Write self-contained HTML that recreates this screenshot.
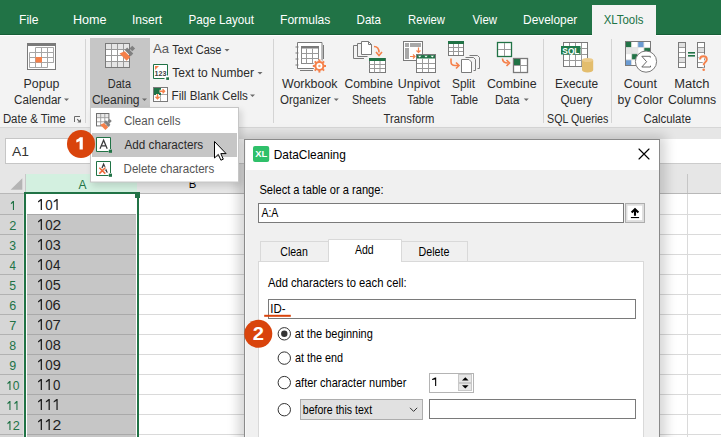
<!DOCTYPE html>
<html><head><meta charset="utf-8"><title>Excel XLTools DataCleaning</title>
<style>html,body{margin:0;padding:0;width:721px;height:437px;overflow:hidden;background:#fff;font-family:"Liberation Sans",sans-serif}</style>
</head><body>
<svg width="721" height="437" viewBox="0 0 721 437" style="display:block"><defs><filter id="blur3" x="-20%" y="-20%" width="140%" height="140%"><feGaussianBlur stdDeviation="3"/></filter><filter id="blur6" x="-20%" y="-20%" width="140%" height="140%"><feGaussianBlur stdDeviation="6"/></filter></defs><g font-family="&quot;Liberation Sans&quot;, sans-serif"><rect x="0" y="0" width="721" height="34" fill="#217346"/>
<rect x="0" y="34" width="721" height="1" fill="#175e37"/>
<rect x="0" y="35" width="721" height="1" fill="#ffffff"/>
<rect x="0" y="36" width="721" height="91" fill="#f3f3f3"/>
<rect x="0" y="127" width="721" height="1" fill="#d6d6d6"/>
<rect x="0" y="128" width="721" height="66" fill="#e6e6e6"/>
<rect x="0" y="194" width="721" height="243" fill="#ffffff"/>
<rect x="592" y="5" width="64" height="31" fill="#f3f3f3"/>
<text x="19.03" y="24.00" font-size="13" fill="#ffffff" textLength="19.53" lengthAdjust="spacingAndGlyphs">File</text>
<text x="72.99" y="24.00" font-size="13" fill="#ffffff" textLength="33.61" lengthAdjust="spacingAndGlyphs">Home</text>
<text x="131.91" y="24.00" font-size="13" fill="#ffffff" textLength="30.16" lengthAdjust="spacingAndGlyphs">Insert</text>
<text x="188.57" y="24.00" font-size="13" fill="#ffffff" textLength="65.50" lengthAdjust="spacingAndGlyphs">Page Layout</text>
<text x="280.03" y="24.00" font-size="13" fill="#ffffff" textLength="50.36" lengthAdjust="spacingAndGlyphs">Formulas</text>
<text x="356.57" y="24.00" font-size="13" fill="#ffffff" textLength="24.45" lengthAdjust="spacingAndGlyphs">Data</text>
<text x="408.10" y="24.00" font-size="13" fill="#ffffff" textLength="36.89" lengthAdjust="spacingAndGlyphs">Review</text>
<text x="472.44" y="24.00" font-size="13" fill="#ffffff" textLength="24.55" lengthAdjust="spacingAndGlyphs">View</text>
<text x="523.05" y="24.00" font-size="13" fill="#ffffff" textLength="54.17" lengthAdjust="spacingAndGlyphs">Developer</text>
<text x="603.72" y="24.00" font-size="13" fill="#217346" textLength="39.67" lengthAdjust="spacingAndGlyphs">XLTools</text>
<rect x="85" y="39" width="1" height="84" fill="#d4d4d4"/>
<rect x="273" y="39" width="1" height="84" fill="#d4d4d4"/>
<rect x="543" y="39" width="1" height="84" fill="#d4d4d4"/>
<rect x="611" y="39" width="1" height="84" fill="#d4d4d4"/>
<rect x="90" y="38" width="60" height="69" fill="#c6c6c6"/>
<text x="23.61" y="88.00" font-size="12.5" fill="#2b2b2b" textLength="35.81" lengthAdjust="spacingAndGlyphs">Popup</text>
<text x="14.12" y="104.00" font-size="12.5" fill="#2b2b2b" textLength="47.09" lengthAdjust="spacingAndGlyphs">Calendar</text>
<text x="2.89" y="123.10" font-size="12.5" fill="#2b2b2b" textLength="62.85" lengthAdjust="spacingAndGlyphs">Date &amp; Time</text>
<text x="107.87" y="88.00" font-size="12.5" fill="#2b2b2b" textLength="23.15" lengthAdjust="spacingAndGlyphs">Data</text>
<text x="91.90" y="104.00" font-size="12.5" fill="#2b2b2b" textLength="47.67" lengthAdjust="spacingAndGlyphs">Cleaning</text>
<text x="172.28" y="54.00" font-size="12.5" fill="#2b2b2b" textLength="49.23" lengthAdjust="spacingAndGlyphs">Text Case</text>
<text x="172.26" y="77.25" font-size="12.5" fill="#2b2b2b" textLength="81.74" lengthAdjust="spacingAndGlyphs">Text to Number</text>
<text x="171.57" y="99.75" font-size="12.5" fill="#2b2b2b" textLength="76.37" lengthAdjust="spacingAndGlyphs">Fill Blank Cells</text>
<text x="281.94" y="88.00" font-size="12.5" fill="#2b2b2b" textLength="55.54" lengthAdjust="spacingAndGlyphs">Workbook</text>
<text x="279.98" y="104.00" font-size="12.5" fill="#2b2b2b" textLength="50.70" lengthAdjust="spacingAndGlyphs">Organizer</text>
<text x="344.39" y="88.00" font-size="12.5" fill="#2b2b2b" textLength="48.68" lengthAdjust="spacingAndGlyphs">Combine</text>
<text x="352.01" y="104.00" font-size="12.5" fill="#2b2b2b" textLength="33.85" lengthAdjust="spacingAndGlyphs">Sheets</text>
<text x="397.82" y="88.00" font-size="12.5" fill="#2b2b2b" textLength="42.26" lengthAdjust="spacingAndGlyphs">Unpivot</text>
<text x="407.28" y="104.00" font-size="12.5" fill="#2b2b2b" textLength="26.22" lengthAdjust="spacingAndGlyphs">Table</text>
<text x="451.97" y="88.00" font-size="12.5" fill="#2b2b2b" textLength="23.10" lengthAdjust="spacingAndGlyphs">Split</text>
<text x="450.77" y="104.00" font-size="12.5" fill="#2b2b2b" textLength="27.25" lengthAdjust="spacingAndGlyphs">Table</text>
<text x="486.88" y="88.00" font-size="12.5" fill="#2b2b2b" textLength="49.71" lengthAdjust="spacingAndGlyphs">Combine</text>
<text x="495.07" y="104.00" font-size="12.5" fill="#2b2b2b" textLength="24.45" lengthAdjust="spacingAndGlyphs">Data</text>
<text x="383.52" y="123.10" font-size="12.5" fill="#2b2b2b" textLength="50.95" lengthAdjust="spacingAndGlyphs">Transform</text>
<text x="555.05" y="88.00" font-size="12.5" fill="#2b2b2b" textLength="43.03" lengthAdjust="spacingAndGlyphs">Execute</text>
<text x="560.47" y="104.00" font-size="12.5" fill="#2b2b2b" textLength="32.01" lengthAdjust="spacingAndGlyphs">Query</text>
<text x="547.02" y="123.10" font-size="12.5" fill="#2b2b2b" textLength="61.34" lengthAdjust="spacingAndGlyphs">SQL Queries</text>
<text x="623.68" y="88.00" font-size="12.5" fill="#2b2b2b" textLength="33.23" lengthAdjust="spacingAndGlyphs">Count</text>
<text x="617.61" y="104.00" font-size="12.5" fill="#2b2b2b" textLength="45.32" lengthAdjust="spacingAndGlyphs">by Color</text>
<text x="674.27" y="88.00" font-size="12.5" fill="#2b2b2b" textLength="35.22" lengthAdjust="spacingAndGlyphs">Match</text>
<text x="667.89" y="104.00" font-size="12.5" fill="#2b2b2b" textLength="48.25" lengthAdjust="spacingAndGlyphs">Columns</text>
<text x="643.43" y="123.10" font-size="12.5" fill="#2b2b2b" textLength="47.57" lengthAdjust="spacingAndGlyphs">Calculate</text>
<path d="M64 98.5h5l-2.5 2.5z" fill="#6a6a6a"/>
<path d="M142 98.5h5l-2.5 2.5z" fill="#6a6a6a"/>
<path d="M224.5 49.0h5.0l-2.5 2.5z" fill="#6a6a6a"/>
<path d="M257.5 72.0h5.0l-2.5 2.5z" fill="#6a6a6a"/>
<path d="M250 94.5h5l-2.5 2.5z" fill="#6a6a6a"/>
<path d="M333.75 98.5h5.0l-2.5 2.5z" fill="#6a6a6a"/>
<path d="M523.75 98.5h5.0l-2.5 2.5z" fill="#6a6a6a"/>
<path d="M74.5 122V116.5H80" fill="none" stroke="#6a6a6a" stroke-width="1"/><path d="M77.2 119.2l2.6 2.6" stroke="#6a6a6a" stroke-width="1.2"/><path d="M81 119V122.6H77.4Z" fill="#6a6a6a"/>
<text x="153.00" y="52.60" font-size="13.5" fill="#5a5a5a" textLength="16.04" lengthAdjust="spacingAndGlyphs">Aa</text>
<g>
<rect x="27.5" y="43.5" width="28" height="26" fill="#ffffff" stroke="#7a7a7a" stroke-width="1"/>
<rect x="27" y="43" width="29" height="3" fill="#7a7a7a"/>
<path d="M35.5 47.5h18v15M35.5 47.5v20M41.5 47.5v20M47.5 47.5v20M29.5 52.5h24M29.5 57.5h24M29.5 62.5h24M29.5 52.5v15h18M53.5 47.5v15" fill="none" stroke="#a6a6a6" stroke-width="1"/>
<rect x="35.5" y="57" width="6.5" height="5.5" fill="#f5804a"/>
</g>
<rect x="105.5" y="43.5" width="24" height="24" fill="#ffffff" stroke="#7a7a7a" stroke-width="1"/>
<rect x="106" y="44" width="23" height="5.5" fill="#e6e6e6"/>
<rect x="106" y="62" width="23" height="5.5" fill="#e6e6e6"/>
<path d="M111.5 43.5v24M117.5 43.5v24M123.5 43.5v24M105.5 49.5h24M105.5 55.5h24M105.5 61.5h24" stroke="#9a9a9a" stroke-width="1"/>
<rect x="105.5" y="43.5" width="24" height="24" fill="none" stroke="#7a7a7a" stroke-width="1"/>
<g transform="translate(125.2 55.6) rotate(45) scale(1)"><path d="M-3.4 -2.7H4.6V2.6H-5.4z" fill="#f5804a"/><rect x="-4.3" y="-7.1" width="8.6" height="3.6" fill="#808080"/><rect x="-2" y="-12" width="4" height="4" fill="#808080"/></g>
<rect x="129" y="64" width="1" height="3" fill="#7a7a7a"/>
<rect x="153.5" y="64.5" width="14.5" height="14" fill="#ffffff"/>
<path d="M167.5 75.5V64.5H153.5V78.5H164.5" fill="none" stroke="#217346"/>
<path d="M155 66h4l-4 4z" fill="#f5804a"/>
<text x="154.57" y="75.80" font-size="7.6" font-weight="bold" fill="#404040" textLength="11.90" lengthAdjust="spacingAndGlyphs">123</text>
<rect x="166.2" y="77.3" width="2.8" height="2.6" fill="#217346"/>
<rect x="153.5" y="87.5" width="14" height="14" fill="#ffffff"/>
<path d="M160.5 94.5H167.5M160.5 94.5V101.5" stroke="#a6a6a6"/>
<rect x="154" y="88" width="7" height="7" fill="#217346"/>
<path d="M159.6 91.3H164.4M162.6 89.3L164.6 91.3 162.6 93.3M157.5 94V98.6M155.5 96.7L157.5 98.7 159.5 96.7" fill="none" stroke="#fff" stroke-width="3"/>
<circle cx="160" cy="94" r="1.1" fill="#217346"/>
<path d="M159.6 91.3H164.4M162.6 89.3L164.6 91.3 162.6 93.3M157.5 94V98.6M155.5 96.7L157.5 98.7 159.5 96.7" fill="none" stroke="#f5804a" stroke-width="1.4"/>
<rect x="153.5" y="87.5" width="14" height="14" fill="none" stroke="#7a7a7a" stroke-width="1"/>
<path d="M297.5 42.5h24.5v26h-24.5z" fill="#fff" stroke="#7a7a7a"/>
<path d="M323.5 45v14M300 70.5h13" stroke="#7a7a7a"/>
<rect x="295.5" y="46.5" width="3" height="1" fill="#7a7a7a"/>
<rect x="295.5" y="52.5" width="3" height="1" fill="#7a7a7a"/>
<rect x="295.5" y="58.5" width="3" height="1" fill="#7a7a7a"/>
<rect x="295.5" y="64.5" width="3" height="1" fill="#7a7a7a"/>
<rect x="301.5" y="46.5" width="17" height="17" fill="#fff" stroke="#8a8a8a" stroke-width="1"/>
<rect x="301" y="46" width="18" height="2.5" fill="#7a7a7a"/>
<path d="M306.5 48.5v15M312.5 48.5v15M301.5 53.5h17M301.5 58.5h17" stroke="#9a9a9a"/>
<g transform="translate(319.4 66)"><circle r="6.3" fill="#f3f3f3"/><circle r="5" fill="#f5804a"/><rect x="-1" y="-6.6" width="2" height="2.5" fill="#f5804a" transform="rotate(0)"/><rect x="-1" y="-6.6" width="2" height="2.5" fill="#f5804a" transform="rotate(45)"/><rect x="-1" y="-6.6" width="2" height="2.5" fill="#f5804a" transform="rotate(90)"/><rect x="-1" y="-6.6" width="2" height="2.5" fill="#f5804a" transform="rotate(135)"/><rect x="-1" y="-6.6" width="2" height="2.5" fill="#f5804a" transform="rotate(180)"/><rect x="-1" y="-6.6" width="2" height="2.5" fill="#f5804a" transform="rotate(225)"/><rect x="-1" y="-6.6" width="2" height="2.5" fill="#f5804a" transform="rotate(270)"/><rect x="-1" y="-6.6" width="2" height="2.5" fill="#f5804a" transform="rotate(315)"/><circle r="3" fill="#fff"/><circle r="1.2" fill="#f5a070"/></g>
<path d="M353.5 58.5v-13h4M364 58.5h-10.5" fill="none" stroke="#7a7a7a"/>
<path d="M357.5 56.5v-13h4M367.5 56.5h-10" fill="none" stroke="#7a7a7a"/>
<path d="M361.5 54.5v-13h7l3 3v10z" fill="#fff" stroke="#7a7a7a"/><path d="M368.5 41.5v3h3" fill="none" stroke="#7a7a7a"/>
<path d="M374 46.5c3 0 5 2 5 6" fill="none" stroke="#f5804a" stroke-width="1.6"/><path d="M376 52l3 3.5 3-3.5" fill="none" stroke="#f5804a" stroke-width="1.6"/>
<rect x="369.5" y="58.5" width="16" height="14" fill="#fff" stroke="#7a7a7a" stroke-width="1"/>
<rect x="369" y="58" width="16.5" height="3" fill="#217346"/>
<path d="M374.5 61v11.5M380 61v11.5M369.5 64.5h15.5M369.5 68.5h15.5" stroke="#9a9a9a"/>
<rect x="403.5" y="41.5" width="19" height="19" fill="#fff" stroke="#7a7a7a" stroke-width="1"/>
<rect x="405" y="43" width="4" height="4" fill="#a8a8a8"/>
<rect x="410" y="43" width="11" height="4" fill="#a8a8a8"/>
<rect x="405" y="48" width="4" height="11" fill="#a8a8a8"/>
<path d="M418.5 47.5v5M416.5 50.5l2 2 2-2M410 56.5h5M413 54.5l2 2-2 2" fill="none" stroke="#f5804a" stroke-width="1.2"/>
<rect x="416.5" y="54.5" width="19" height="18" fill="#fff" stroke="#7a7a7a" stroke-width="1"/>
<rect x="416" y="54" width="20" height="4.5" fill="#217346"/>
<path d="M418 55.7h3.4l-1.7 1.7zM424.3 55.7h3.4l-1.7 1.7zM430.6 55.7h3.4l-1.7 1.7z" fill="#fff"/>
<path d="M422.5 58.5v14M428.5 58.5v14M416.5 63.5h19M416.5 68.5h19" stroke="#9a9a9a"/>
<rect x="416.5" y="54.5" width="19" height="18" fill="none" stroke="#7a7a7a" stroke-width="1"/>
<rect x="448.5" y="41.5" width="15" height="14" fill="#fff" stroke="#7a7a7a" stroke-width="1"/>
<path d="M453.5 44v11.5M458.5 44v11.5M448.5 47.5h15M448.5 51.5h15" stroke="#9a9a9a"/>
<rect x="448.5" y="41.5" width="15" height="14" fill="none" stroke="#7a7a7a" stroke-width="1"/>
<rect x="448" y="41" width="16" height="3" fill="#217346"/>
<path d="M451 58.5v3c0 2.5 1.5 4 4 4h3" fill="none" stroke="#f5804a" stroke-width="1.6"/><path d="M456 62.5l3 3-3 3" fill="none" stroke="#f5804a" stroke-width="1.6"/>
<path d="M469.5 55.5h8l2 2v11h-2M465.5 57.5h8l2 2v11h-2" fill="none" stroke="#7a7a7a"/>
<path d="M461.5 59.5h7.5l2.5 2.5v10.5h-10z" fill="#fff" stroke="#7a7a7a"/>
<rect x="497.5" y="42.5" width="14" height="14" fill="#fff" stroke="#217346" stroke-width="1.3"/>
<path d="M504.5 43v13M498 49.5h13" stroke="#9a9a9a"/>
<path d="M502.5 58.5c0 3 2 4.5 5.5 4.5" fill="none" stroke="#f5804a" stroke-width="1.6"/><path d="M506.5 60l3 3-3 3" fill="none" stroke="#f5804a" stroke-width="1.6"/>
<rect x="513.5" y="58.5" width="14" height="14" fill="#fff" stroke="#7a7a7a" stroke-width="1.3"/>
<rect x="514" y="59" width="6.5" height="6.5" fill="#217346"/>
<path d="M520.5 59v13M514 65.5h13" stroke="#9a9a9a"/>
<rect x="563.5" y="42.5" width="24" height="24" fill="#fff" stroke="#7a7a7a" stroke-width="1"/>
<path d="M569.5 43v23.5M575.5 43v23.5M581.5 43v23.5M563.5 48.5h24M563.5 54.5h24M563.5 60.5h24" stroke="#9a9a9a"/>
<rect x="563.5" y="42.5" width="24" height="24" fill="none" stroke="#7a7a7a" stroke-width="1"/>
<rect x="561" y="46" width="19.5" height="8.5" fill="#1f7d4c"/>
<text x="562.35" y="53.60" font-size="9" font-weight="bold" fill="#fff" textLength="17.11" lengthAdjust="spacingAndGlyphs">SQL</text>
<path d="M582 60v10c0 1.5 2.5 2.5 5.6 2.5s5.6-1 5.6-2.5v-10z" fill="#e3bd6d"/><ellipse cx="587.6" cy="60" rx="5.6" ry="2" fill="#eccb8a"/>
<rect x="625.5" y="41.5" width="6.15" height="6.1" fill="#217346"/>
<rect x="631.65" y="41.5" width="6.15" height="6.1" fill="#fff"/>
<rect x="637.8" y="41.5" width="6.15" height="6.1" fill="#6b9bd2"/>
<rect x="643.95" y="41.5" width="6.15" height="6.1" fill="#fff"/>
<rect x="625.5" y="47.6" width="6.15" height="6.1" fill="#e6e6e6"/>
<rect x="631.65" y="47.6" width="6.15" height="6.1" fill="#e6e6e6"/>
<rect x="637.8" y="47.6" width="6.15" height="6.1" fill="#fff"/>
<rect x="643.95" y="47.6" width="6.15" height="6.1" fill="#217346"/>
<rect x="625.5" y="53.7" width="6.15" height="6.1" fill="#fff"/>
<rect x="631.65" y="53.7" width="6.15" height="6.1" fill="#217346"/>
<rect x="637.8" y="53.7" width="6.15" height="6.1" fill="#fff"/>
<rect x="643.95" y="53.7" width="6.15" height="6.1" fill="#fff"/>
<rect x="625.5" y="59.8" width="6.15" height="6.1" fill="#6b9bd2"/>
<rect x="631.65" y="59.8" width="6.15" height="6.1" fill="#fff"/>
<rect x="637.8" y="59.8" width="6.15" height="6.1" fill="#fff"/>
<rect x="643.95" y="59.8" width="6.15" height="6.1" fill="#fff"/>
<path d="M631.65 41.5v24.5M637.8 41.5v24.5M643.95 41.5v24.5M625.5 47.6h24.5M625.5 53.7h24.5M625.5 59.8h24.5" stroke="#dedede" stroke-width="0.8"/>
<rect x="625.5" y="41.5" width="25" height="24" fill="none" stroke="#7a7a7a" stroke-width="1"/>
<circle cx="646" cy="61.6" r="10.6" fill="#fff" stroke="#7a7a7a" stroke-width="1"/>
<path d="M650.3 57.6V56.3H641.8L646.6 61.7 641.8 67H650.5V65.7" fill="none" stroke="#5a5a5a" stroke-width="0.9"/>
<rect x="678.5" y="42.5" width="7" height="25" fill="#fff" stroke="#7a7a7a" stroke-width="1"/>
<rect x="679.0" y="43.0" width="6" height="4.5" fill="#e0e0e0"/>
<rect x="679.0" y="58.0" width="6" height="4.5" fill="#e0e0e0"/>
<path d="M678.5 47.5h7M678.5 52.5h7M678.5 57.5h7M678.5 62.5h7" stroke="#9a9a9a"/>
<rect x="678.5" y="42.5" width="7" height="25" fill="none" stroke="#7a7a7a" stroke-width="1"/>
<rect x="697.5" y="42.5" width="7" height="25" fill="#fff" stroke="#7a7a7a" stroke-width="1"/>
<rect x="698.0" y="48.0" width="6" height="4.5" fill="#e0e0e0"/>
<path d="M697.5 47.5h7M697.5 52.5h7M697.5 57.5h7M697.5 62.5h7" stroke="#9a9a9a"/>
<rect x="697.5" y="42.5" width="7" height="25" fill="none" stroke="#7a7a7a" stroke-width="1"/>
<rect x="688" y="52" width="7" height="1.6" fill="#217346"/>
<rect x="688" y="55" width="7" height="1.6" fill="#217346"/>
<path d="M700 59.5c0-2 1.6-3.3 3.4-3.3s3.4 1.3 3.4 3.2c0 2.6-3.1 2.9-3.1 5.8" fill="none" stroke="#f3f3f3" stroke-width="3.8"/><circle cx="703.7" cy="69.8" r="2.3" fill="#f3f3f3"/>
<path d="M700 59.5c0-2 1.6-3.3 3.4-3.3s3.4 1.3 3.4 3.2c0 2.6-3.1 2.9-3.1 5.8" fill="none" stroke="#f5804a" stroke-width="1.9"/><circle cx="703.7" cy="69.8" r="1.3" fill="#f5804a"/>
<rect x="5.5" y="138.5" width="95" height="25" fill="#ffffff" stroke="#c6c6c6" stroke-width="1"/>
<text x="11.90" y="155.80" font-size="13" fill="#333" textLength="16.97" lengthAdjust="spacingAndGlyphs">A1</text>
<rect x="150" y="139" width="571" height="24" fill="#ffffff"/>
<rect x="150" y="163" width="571" height="1" fill="#cccccc"/>
<rect x="0" y="174" width="721" height="19" fill="#e6e6e6"/>
<rect x="26" y="174" width="111" height="19" fill="#d3f0e0"/>
<rect x="0" y="193" width="721" height="1" fill="#b8b8b8"/>
<path d="M22.3 178.2V189.7H10.6z" fill="#b4b4b4"/>
<rect x="25" y="174" width="1" height="19" fill="#c8c8c8"/>
<rect x="687" y="174" width="1" height="19" fill="#c6c6c6"/>
<text x="78.40" y="188.70" font-size="12.5" fill="#217346" textLength="8.02" lengthAdjust="spacingAndGlyphs">A</text>
<text x="188.69" y="188.40" font-size="12.5" fill="#000" textLength="7.61" lengthAdjust="spacingAndGlyphs">B</text>
<rect x="0" y="194" width="24" height="243" fill="#d6d6d6"/>
<rect x="23" y="194" width="1" height="243" fill="#e2e0e0"/>
<rect x="0" y="214" width="23" height="1" fill="#b2b2b2"/>
<rect x="0" y="234" width="23" height="1" fill="#b2b2b2"/>
<rect x="0" y="254" width="23" height="1" fill="#b2b2b2"/>
<rect x="0" y="274" width="23" height="1" fill="#b2b2b2"/>
<rect x="0" y="294" width="23" height="1" fill="#b2b2b2"/>
<rect x="0" y="314" width="23" height="1" fill="#b2b2b2"/>
<rect x="0" y="334" width="23" height="1" fill="#b2b2b2"/>
<rect x="0" y="354" width="23" height="1" fill="#b2b2b2"/>
<rect x="0" y="374" width="23" height="1" fill="#b2b2b2"/>
<rect x="0" y="394" width="23" height="1" fill="#b2b2b2"/>
<rect x="0" y="414" width="23" height="1" fill="#b2b2b2"/>
<rect x="0" y="434" width="23" height="1" fill="#b2b2b2"/>
<rect x="0" y="454" width="23" height="1" fill="#b2b2b2"/>
<path d="M12.90 200.90H14.00V210.00H12.90V202.90L10.90 204.30V203.10Z" fill="#217346"/>
<text x="9.16" y="230.00" font-size="13.2" fill="#217346" textLength="7.09" lengthAdjust="spacingAndGlyphs">2</text>
<text x="9.31" y="250.00" font-size="13.2" fill="#217346" textLength="6.79" lengthAdjust="spacingAndGlyphs">3</text>
<text x="9.57" y="270.00" font-size="13.2" fill="#217346" textLength="6.39" lengthAdjust="spacingAndGlyphs">4</text>
<text x="9.31" y="290.00" font-size="13.2" fill="#217346" textLength="6.79" lengthAdjust="spacingAndGlyphs">5</text>
<text x="9.18" y="310.00" font-size="13.2" fill="#217346" textLength="6.94" lengthAdjust="spacingAndGlyphs">6</text>
<text x="9.16" y="330.00" font-size="13.2" fill="#217346" textLength="7.09" lengthAdjust="spacingAndGlyphs">7</text>
<text x="9.24" y="350.00" font-size="13.2" fill="#217346" textLength="6.86" lengthAdjust="spacingAndGlyphs">8</text>
<text x="9.24" y="370.00" font-size="13.2" fill="#217346" textLength="6.94" lengthAdjust="spacingAndGlyphs">9</text>
<path d="M9.40 380.90H10.50V390.00H9.40V382.90L7.40 384.30V383.10Z" fill="#217346"/>
<text x="12.82" y="390.00" font-size="13.2" fill="#217346" textLength="6.72" lengthAdjust="spacingAndGlyphs">0</text>
<path d="M9.40 400.90H10.50V410.00H9.40V402.90L7.40 404.30V403.10Z" fill="#217346"/>
<path d="M16.40 400.90H17.50V410.00H16.40V402.90L14.40 404.30V403.10Z" fill="#217346"/>
<path d="M9.40 420.90H10.50V430.00H9.40V422.90L7.40 424.30V423.10Z" fill="#217346"/>
<text x="12.66" y="430.00" font-size="13.2" fill="#217346" textLength="7.09" lengthAdjust="spacingAndGlyphs">2</text>
<rect x="139" y="214" width="582" height="1" fill="#dadada"/>
<rect x="139" y="234" width="582" height="1" fill="#dadada"/>
<rect x="139" y="254" width="582" height="1" fill="#dadada"/>
<rect x="139" y="274" width="582" height="1" fill="#dadada"/>
<rect x="139" y="294" width="582" height="1" fill="#dadada"/>
<rect x="139" y="314" width="582" height="1" fill="#dadada"/>
<rect x="139" y="334" width="582" height="1" fill="#dadada"/>
<rect x="139" y="354" width="582" height="1" fill="#dadada"/>
<rect x="139" y="374" width="582" height="1" fill="#dadada"/>
<rect x="139" y="394" width="582" height="1" fill="#dadada"/>
<rect x="139" y="414" width="582" height="1" fill="#dadada"/>
<rect x="139" y="434" width="582" height="1" fill="#dadada"/>
<rect x="139" y="454" width="582" height="1" fill="#dadada"/>
<rect x="687" y="194" width="1" height="243" fill="#dadada"/>
<rect x="27" y="214" width="109" height="223" fill="#c6c6c6"/>
<rect x="27" y="214" width="109" height="1" fill="#a9a9a9"/>
<rect x="27" y="234" width="109" height="1" fill="#a9a9a9"/>
<rect x="27" y="254" width="109" height="1" fill="#a9a9a9"/>
<rect x="27" y="274" width="109" height="1" fill="#a9a9a9"/>
<rect x="27" y="294" width="109" height="1" fill="#a9a9a9"/>
<rect x="27" y="314" width="109" height="1" fill="#a9a9a9"/>
<rect x="27" y="334" width="109" height="1" fill="#a9a9a9"/>
<rect x="27" y="354" width="109" height="1" fill="#a9a9a9"/>
<rect x="27" y="374" width="109" height="1" fill="#a9a9a9"/>
<rect x="27" y="394" width="109" height="1" fill="#a9a9a9"/>
<rect x="27" y="414" width="109" height="1" fill="#a9a9a9"/>
<rect x="27" y="434" width="109" height="1" fill="#a9a9a9"/>
<path d="M40.70 199.00H42.00V210.00H40.70V201.00L38.00 202.40V201.20Z" fill="#222"/>
<text x="45.17" y="210.00" font-size="15.5" fill="#222" textLength="7.42" lengthAdjust="spacingAndGlyphs">0</text>
<path d="M56.40 199.00H57.70V210.00H56.40V201.00L53.70 202.40V201.20Z" fill="#222"/>
<path d="M40.70 219.00H42.00V230.00H40.70V221.00L38.00 222.40V221.20Z" fill="#222"/>
<text x="45.17" y="230.00" font-size="15.5" fill="#222" textLength="7.42" lengthAdjust="spacingAndGlyphs">0</text>
<text x="52.41" y="230.00" font-size="15.5" fill="#222" textLength="8.80" lengthAdjust="spacingAndGlyphs">2</text>
<path d="M40.70 239.00H42.00V250.00H40.70V241.00L38.00 242.40V241.20Z" fill="#222"/>
<text x="45.17" y="250.00" font-size="15.5" fill="#222" textLength="7.42" lengthAdjust="spacingAndGlyphs">0</text>
<text x="52.73" y="250.00" font-size="15.5" fill="#222" textLength="7.96" lengthAdjust="spacingAndGlyphs">3</text>
<path d="M40.70 259.00H42.00V270.00H40.70V261.00L38.00 262.40V261.20Z" fill="#222"/>
<text x="45.17" y="270.00" font-size="15.5" fill="#222" textLength="7.42" lengthAdjust="spacingAndGlyphs">0</text>
<text x="53.03" y="270.00" font-size="15.5" fill="#222" textLength="7.49" lengthAdjust="spacingAndGlyphs">4</text>
<path d="M40.70 279.00H42.00V290.00H40.70V281.00L38.00 282.40V281.20Z" fill="#222"/>
<text x="45.17" y="290.00" font-size="15.5" fill="#222" textLength="7.42" lengthAdjust="spacingAndGlyphs">0</text>
<text x="52.73" y="290.00" font-size="15.5" fill="#222" textLength="7.96" lengthAdjust="spacingAndGlyphs">5</text>
<path d="M40.70 299.00H42.00V310.00H40.70V301.00L38.00 302.40V301.20Z" fill="#222"/>
<text x="45.17" y="310.00" font-size="15.5" fill="#222" textLength="7.42" lengthAdjust="spacingAndGlyphs">0</text>
<text x="52.57" y="310.00" font-size="15.5" fill="#222" textLength="8.13" lengthAdjust="spacingAndGlyphs">6</text>
<path d="M40.70 319.00H42.00V330.00H40.70V321.00L38.00 322.40V321.20Z" fill="#222"/>
<text x="45.17" y="330.00" font-size="15.5" fill="#222" textLength="7.42" lengthAdjust="spacingAndGlyphs">0</text>
<text x="52.55" y="330.00" font-size="15.5" fill="#222" textLength="8.31" lengthAdjust="spacingAndGlyphs">7</text>
<path d="M40.70 339.00H42.00V350.00H40.70V341.00L38.00 342.40V341.20Z" fill="#222"/>
<text x="45.17" y="350.00" font-size="15.5" fill="#222" textLength="7.42" lengthAdjust="spacingAndGlyphs">0</text>
<text x="52.65" y="350.00" font-size="15.5" fill="#222" textLength="8.05" lengthAdjust="spacingAndGlyphs">8</text>
<path d="M40.70 359.00H42.00V370.00H40.70V361.00L38.00 362.40V361.20Z" fill="#222"/>
<text x="45.17" y="370.00" font-size="15.5" fill="#222" textLength="7.42" lengthAdjust="spacingAndGlyphs">0</text>
<text x="52.64" y="370.00" font-size="15.5" fill="#222" textLength="8.13" lengthAdjust="spacingAndGlyphs">9</text>
<path d="M40.70 379.00H42.00V390.00H40.70V381.00L38.00 382.40V381.20Z" fill="#222"/>
<path d="M48.55 379.00H49.85V390.00H48.55V381.00L45.85 382.40V381.20Z" fill="#222"/>
<text x="53.02" y="390.00" font-size="15.5" fill="#222" textLength="7.42" lengthAdjust="spacingAndGlyphs">0</text>
<path d="M40.70 399.00H42.00V410.00H40.70V401.00L38.00 402.40V401.20Z" fill="#222"/>
<path d="M48.55 399.00H49.85V410.00H48.55V401.00L45.85 402.40V401.20Z" fill="#222"/>
<path d="M56.40 399.00H57.70V410.00H56.40V401.00L53.70 402.40V401.20Z" fill="#222"/>
<path d="M40.70 419.00H42.00V430.00H40.70V421.00L38.00 422.40V421.20Z" fill="#222"/>
<path d="M48.55 419.00H49.85V430.00H48.55V421.00L45.85 422.40V421.20Z" fill="#222"/>
<text x="52.41" y="430.00" font-size="15.5" fill="#222" textLength="8.80" lengthAdjust="spacingAndGlyphs">2</text>
<rect x="24" y="192" width="2" height="245" fill="#217346"/>
<rect x="137" y="192" width="2" height="245" fill="#217346"/>
<rect x="24" y="192" width="115" height="2" fill="#217346"/>
<rect x="135" y="192" width="5" height="6" fill="#217346"/>
<rect x="238" y="135" width="428" height="320" fill="#000" opacity="0.16" filter="url(#blur6)"/>
<rect x="92" y="110" width="150" height="76" fill="#000" opacity="0.12" filter="url(#blur3)"/>
<rect x="90.5" y="107.5" width="148" height="74.5" fill="#ffffff" stroke="#c6c6c6" stroke-width="1"/>
<rect x="92" y="133" width="145" height="24" fill="#c6c6c6"/>
<text x="123.92" y="125.00" font-size="12.5" fill="#555" textLength="56.50" lengthAdjust="spacingAndGlyphs">Clean cells</text>
<text x="124.50" y="149.00" font-size="12.5" fill="#2a2a2a" textLength="78.62" lengthAdjust="spacingAndGlyphs">Add characters</text>
<text x="123.57" y="173.30" font-size="12.5" fill="#555" textLength="90.65" lengthAdjust="spacingAndGlyphs">Delete characters</text>
<rect x="96.5" y="113.5" width="12.4" height="12.4" fill="#fff"/>
<rect x="97" y="114" width="11.4" height="3.6" fill="#e8e8e8"/>
<path d="M96.5 117.7h12.4M96.5 121.8h12.4M100.7 113.5v12.4M104.8 113.5v12.4" stroke="#9a9a9a" stroke-width="0.9"/>
<rect x="96.5" y="113.5" width="12.4" height="12.4" fill="none" stroke="#707070" stroke-width="1"/>
<g transform="translate(104.4 126.3) rotate(45) scale(0.74)"><path d="M-3.4 -2.7H4.6V2.6H-5.4z" fill="#f5804a"/><rect x="-4.3" y="-7.1" width="8.6" height="3.6" fill="#808080"/><rect x="-2" y="-12" width="4" height="4" fill="#808080"/></g>
<rect x="96.5" y="137.5" width="14" height="14" fill="#fff"/>
<path d="M110.5 149V137.5H96.5V151.5H108.5" fill="none" stroke="#217346" stroke-width="1"/>
<rect x="108.8" y="149.6" width="3.2" height="3.2" fill="#217346"/>
<path d="M100 148.8L103.6 140.2L107.2 148.8M101.3 145.8H105.9" fill="none" stroke="#3c3c3c" stroke-width="1.25"/>
<rect x="96.5" y="161.5" width="14" height="14" fill="#fff"/>
<path d="M110.5 173V161.5H96.5V175.5H108.5" fill="none" stroke="#217346" stroke-width="1"/>
<rect x="108.8" y="173.6" width="3.2" height="3.2" fill="#217346"/>
<path d="M100 172.8L103.6 164.2L107.2 172.8M101.3 169.8H105.9" fill="none" stroke="#3c3c3c" stroke-width="1.25"/>
<path d="M99 167.5l6.6 6.2M105.6 167.5l-6.6 6.2" stroke="#fff" stroke-width="3"/>
<path d="M99.3 167.8l6 5.8M105.3 167.8l-6 5.8" stroke="#ee6a3a" stroke-width="1.5"/>
<circle cx="81" cy="144" r="14" fill="#d9440c"/>
<path d="M80 137.3H82.8V149.6H79.6V141Q78 142 76.3 142.5V139.8Q78.6 139 80 137.3Z" fill="#fff"/>
<rect x="244.5" y="139.5" width="415" height="310" fill="#f0f0f0" stroke="#8a8a8a" stroke-width="1"/>
<rect x="245" y="140" width="414" height="30" fill="#ffffff"/>
<rect x="245" y="140" width="1" height="300" fill="#f7f7f7"/>
<rect x="253" y="146" width="16.2" height="16" rx="2" fill="#2fc06a"/>
<text x="255.21" y="157.00" font-size="8.8" font-weight="bold" fill="#fff" textLength="12.00" lengthAdjust="spacingAndGlyphs">XL</text>
<text x="273.75" y="159.20" font-size="13" fill="#000" textLength="72.02" lengthAdjust="spacingAndGlyphs">DataCleaning</text>
<path d="M639 149l10 10M649 149l-10 10" stroke="#000" stroke-width="1.15" stroke-linecap="round"/>
<text x="259.40" y="193.80" font-size="12.2" fill="#000" textLength="124.14" lengthAdjust="spacingAndGlyphs">Select a table or a range:</text>
<rect x="258.5" y="203.5" width="365" height="19" fill="#fff" stroke="#7a7a7a" stroke-width="1"/>
<text x="261.40" y="217.00" font-size="12.2" fill="#000" textLength="17.02" lengthAdjust="spacingAndGlyphs">A:A</text>
<rect x="625.5" y="203.5" width="19" height="19" fill="#dedede" stroke="#adadad" stroke-width="1"/>
<rect x="627.5" y="205.7" width="14.6" height="14.4" fill="#ffffff"/>
<path d="M631.6 212.6L635 209.2 638.4 212.6M635 209.8V215.8" fill="none" stroke="#000" stroke-width="2.1"/><rect x="630.9" y="217" width="8.2" height="1.1" fill="#000"/>
<rect x="258.5" y="261.5" width="385" height="200" fill="#ffffff" stroke="#d9d9d9" stroke-width="1"/>
<rect x="260.5" y="241.5" width="68" height="20" fill="#f0f0f0" stroke="#d9d9d9" stroke-width="1"/>
<rect x="401.5" y="241.5" width="66" height="20" fill="#f0f0f0" stroke="#d9d9d9" stroke-width="1"/>
<path d="M328.5 262V239.5h73V262" fill="#fff" stroke="#d9d9d9"/>
<rect x="329" y="261" width="72" height="2" fill="#ffffff"/>
<text x="280.27" y="255.80" font-size="12.2" fill="#000" textLength="27.54" lengthAdjust="spacingAndGlyphs">Clean</text>
<text x="355.00" y="253.90" font-size="12.2" fill="#000" textLength="18.68" lengthAdjust="spacingAndGlyphs">Add</text>
<text x="418.54" y="256.00" font-size="12.2" fill="#000" textLength="30.95" lengthAdjust="spacingAndGlyphs">Delete</text>
<text x="267.90" y="286.70" font-size="12.2" fill="#000" textLength="138.67" lengthAdjust="spacingAndGlyphs">Add characters to each cell:</text>
<rect x="268.5" y="299.5" width="367" height="19" fill="#fff" stroke="#7a7a7a" stroke-width="1"/>
<text x="270.27" y="313.00" font-size="12.2" fill="#000" textLength="15.22" lengthAdjust="spacingAndGlyphs">ID-</text>
<rect x="264.2" y="314.8" width="26.6" height="2" fill="#d9440c"/>
<circle cx="284.3" cy="333.8" r="6.2" fill="#fff" stroke="#333" stroke-width="1"/>
<circle cx="284.3" cy="358.1" r="6.2" fill="#fff" stroke="#333" stroke-width="1"/>
<circle cx="284.3" cy="382.6" r="6.2" fill="#fff" stroke="#333" stroke-width="1"/>
<circle cx="284.3" cy="409.7" r="6.2" fill="#fff" stroke="#333" stroke-width="1"/>
<circle cx="284.3" cy="333.8" r="3.2" fill="#333"/>
<text x="294.66" y="337.90" font-size="12.2" fill="#000" textLength="78.18" lengthAdjust="spacingAndGlyphs">at the beginning</text>
<text x="294.97" y="361.80" font-size="12.2" fill="#000" textLength="48.17" lengthAdjust="spacingAndGlyphs">at the end</text>
<text x="294.96" y="386.80" font-size="12.2" fill="#000" textLength="111.42" lengthAdjust="spacingAndGlyphs">after character number</text>
<rect x="429.5" y="373.5" width="44" height="19" fill="#fff" stroke="#b4b4b4" stroke-width="1"/>
<path d="M435.10 377.40H436.20V385.90H435.10V379.40L432.10 380.00V378.90Z" fill="#000"/>
<rect x="458.5" y="374.5" width="13" height="8" fill="#e6e6e6" stroke="#c8c8c8" stroke-width="1"/>
<rect x="458.5" y="383.5" width="13" height="7" fill="#e6e6e6" stroke="#c8c8c8" stroke-width="1"/>
<path d="M462 380.5l3.3-3.3 3.3 3.3zM462 385.3l3.3 3.3 3.3-3.3z" fill="#000"/>
<rect x="300.5" y="399.5" width="122" height="20" fill="#e1e1e1" stroke="#adadad" stroke-width="1"/>
<text x="302.81" y="414.00" font-size="12.2" fill="#000" textLength="69.28" lengthAdjust="spacingAndGlyphs">before this text</text>
<path d="M410 407.8l3.6 3.6 3.6-3.6" fill="none" stroke="#333" stroke-width="1"/>
<rect x="429.5" y="399.5" width="206" height="19" fill="#fff" stroke="#7a7a7a" stroke-width="1"/>
<circle cx="258.3" cy="333.8" r="14" fill="#d9440c"/>
<text x="252.79" y="340.00" font-size="17.5" font-weight="bold" fill="#fff" textLength="11.24" lengthAdjust="spacingAndGlyphs">2</text>
<path d="M214.5 141.5v16.5l3.8-3.6 2.6 5.8 2.4-1-2.5-5.6h5.3z" fill="#fff" stroke="#000" stroke-width="1" stroke-linejoin="round"/></g></svg>
</body></html>
